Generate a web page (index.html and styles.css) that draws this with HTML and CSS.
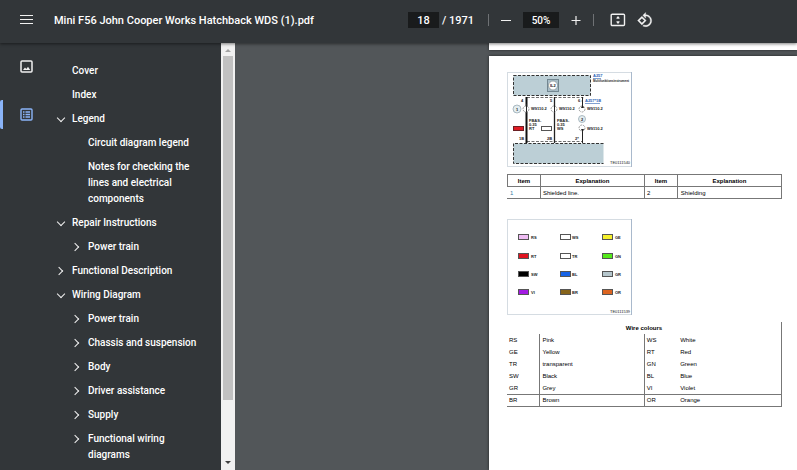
FILE: index.html
```html
<!DOCTYPE html>
<html lang="en">
<head>
<meta charset="utf-8">
<title>Mini F56 John Cooper Works Hatchback WDS (1).pdf</title>
<link rel="stylesheet" href="styles.css">
</head>
<body>
<header class="toolbar">
  <button class="icon-btn menu" aria-label="Menu"><svg width="14" height="10" viewBox="0 0 14 10"><path d="M0 .5h13M0 4.500h13M0 8.500h13" stroke="#f1f1f1" stroke-width="1"/></svg></button>
  <h1 class="title">Mini F56 John Cooper Works Hatchback WDS (1).pdf</h1>
  <div class="controls">
    <input class="field page-no" type="text" value="18" aria-label="Page number">
    <span class="total">/ 1971</span>
    <span class="sep first"></span>
    <button class="icon-btn" aria-label="Zoom out"><svg width="12" height="12" viewBox="0 0 12 12"><path d="M1 6.500h10" stroke="#f1f1f1"/></svg></button>
    <input class="field zoom" type="text" value="50%" aria-label="Zoom level">
    <button class="icon-btn" aria-label="Zoom in"><svg width="12" height="12" viewBox="0 0 12 12"><path d="M1.500 6.500h9M6 2v9" stroke="#f1f1f1" stroke-width="1.200"/></svg></button>
    <span class="sep"></span>
    <button class="icon-btn fit" aria-label="Fit to page"><svg width="16" height="14" viewBox="0 0 16 14"><rect x="1.200" y="1.200" width="13.300" height="11.300" rx="1" fill="none" stroke="#f1f1f1" stroke-width="1.400"/><path d="M8 3L10 5.500H6zM8 11L6 8.500h4zM7.500 5h1v1h-1zM7.500 8h1v1h-1z" fill="#f1f1f1"/></svg></button>
    <button class="icon-btn" aria-label="Rotate"><svg width="16" height="16" viewBox="0 0 24 24"><path fill="#f1f1f1" stroke="#f1f1f1" stroke-width=".5" d="M7.340 6.410L.86 12.900l6.490 6.480 6.490-6.480-6.500-6.490zM3.690 12.900l3.660-3.660L11 12.900l-3.660 3.660-3.650-3.660zm15.670-6.260C17.610 4.880 15.300 4 13 4V.76L8.760 5 13 9.240V6c1.790 0 3.580.68 4.950 2.050 2.730 2.730 2.730 7.170 0 9.900C16.580 19.320 14.790 20 13 20c-.97 0-1.940-.21-2.840-.61l-1.490 1.490C10.020 21.620 11.510 22 13 22c2.300 0 4.610-.88 6.360-2.640 3.520-3.510 3.520-9.210 0-12.720z"/></svg></button>
  </div>
</header>
<div class="main">
  <nav class="rail" aria-label="Panels">
    <button class="rail-btn" aria-label="Thumbnails"><svg width="13" height="13" viewBox="0 0 13 13"><rect x="1" y="1" width="11" height="11" rx="1" fill="none" stroke="#f1f1f1" stroke-width="1.500"/><path d="M3 10l2-2.500L6.300 9 8 6.800 10.200 10z" fill="#f1f1f1"/></svg></button>
    <button class="rail-btn active" aria-label="Document outline"><svg width="13" height="13" viewBox="0 0 13 13"><rect x="1" y="1" width="11" height="11" rx="1" fill="none" stroke="#8ab4f8" stroke-width="1.400"/><path d="M3 4h1.500M5.500 4H10M3 6.500h1.500M5.500 6.500H10M3 9h1.500M5.500 9H10" stroke="#8ab4f8" stroke-width="1.400"/></svg></button>
  </nav>
  <nav class="outline" aria-label="Outline">
    <ul class="tree">
      <li><div class="row"><a href="#">Cover</a></div></li>
      <li><div class="row"><a href="#">Index</a></div></li>
      <li><div class="row"><button class="chev open" aria-label="Collapse Legend"></button><a href="#">Legend</a></div>
        <ul>
          <li><div class="row"><a href="#">Circuit diagram legend</a></div></li>
          <li><div class="row"><a href="#">Notes for checking the lines and electrical components</a></div></li>
        </ul></li>
      <li><div class="row"><button class="chev open" aria-label="Collapse Repair Instructions"></button><a href="#">Repair Instructions</a></div>
        <ul>
          <li><div class="row"><button class="chev" aria-label="Expand Power train"></button><a href="#">Power train</a></div></li>
        </ul></li>
      <li><div class="row"><button class="chev" aria-label="Expand Functional Description"></button><a href="#">Functional Description</a></div></li>
      <li><div class="row"><button class="chev open" aria-label="Collapse Wiring Diagram"></button><a href="#">Wiring Diagram</a></div>
        <ul>
          <li><div class="row"><button class="chev" aria-label="Expand Power train"></button><a href="#">Power train</a></div></li>
          <li><div class="row"><button class="chev" aria-label="Expand Chassis and suspension"></button><a href="#">Chassis and suspension</a></div></li>
          <li><div class="row"><button class="chev" aria-label="Expand Body"></button><a href="#">Body</a></div></li>
          <li><div class="row"><button class="chev" aria-label="Expand Driver assistance"></button><a href="#">Driver assistance</a></div></li>
          <li><div class="row"><button class="chev" aria-label="Expand Supply"></button><a href="#">Supply</a></div></li>
          <li><div class="row"><button class="chev" aria-label="Expand Functional wiring diagrams"></button><a href="#">Functional wiring diagrams</a></div></li>
        </ul></li>
    </ul>
  </nav>
  <div class="scrollbar" aria-hidden="true">
    <svg class="arrow" width="6" height="3" viewBox="0 0 6 3"><path d="M3 0l3 3H0z" fill="#a3a3a3"/></svg>
    <span class="thumb"></span>
    <svg class="arrow" width="6" height="3" viewBox="0 0 6 3"><path d="M0 0h6L3 3z" fill="#404040"/></svg>
  </div>
  <main class="viewer">
    <div class="sheet previous"></div>
    <article class="sheet">
      <svg class="figure" width="125" height="95" viewBox="0 0 125 95" role="img" aria-label="Circuit diagram with shielded lines">
        <rect x=".5" y=".5" width="124" height="94" fill="#fff" stroke="#d5dce2"/>
        <path d="M124.500 0v95" stroke="#a9b9cc"/>
        <g fill="#bccfd6" stroke="#333" stroke-dasharray="3 1.500">
          <rect x="6.500" y="3.500" width="77" height="20"/>
          <path d="M96.500 71.500H6.500v20h90" />
        </g>
        <rect x="40.500" y="7.500" width="11" height="12" fill="#a9bec8" stroke="#738791"/>
        <circle cx="46" cy="13.500" r="4.500" fill="#fff" stroke="#7c8990" stroke-width=".7"/>
        <text x="43" y="15">IL2</text>
        <g class="link"><text x="86" y="5">A257</text><text x="78" y="30">A257*1B</text></g>
        <path d="M86 6.500h8M78 31.500h15" stroke="#4a78bd" stroke-width=".7"/>
        <text class="small" x="86" y="10">Multifunktionsinstrument</text>
        <g stroke="#333" stroke-width=".7" stroke-dasharray="3 1.500" fill="none">
          <path d="M20 25.500h56l-1 4M20 69.500h56"/>
        </g>
        <path d="M19.500 25v46" stroke="#111" stroke-width="2"/>
        <path d="M47.500 25v46" stroke="#222" stroke-width="1.300"/>
        <path d="M75.500 25v9M75.500 59v12" stroke="#222"/>
        <g fill="#fff" stroke="#777" stroke-width=".7">
          <g stroke-dasharray="2 1"><circle cx="19" cy="37" r="3"/><circle cx="47" cy="37" r="3"/><circle cx="75" cy="37" r="3"/><circle cx="75" cy="56" r="3"/></g>
          <circle cx="10" cy="37" r="4" fill="#e4edf0" stroke="#8ca0aa"/><circle cx="75" cy="47" r="3.500" fill="#e4edf0" stroke="#8ca0aa"/>
        </g>
        <path d="M19.500 32v8M47.500 32v8" stroke="#222"/>
        <path d="M75.500 33l1.500 3h-3zM75.500 60l1.500-3h-3z" fill="#222"/>
        <text x="9" y="39">1</text><text x="74" y="49">2</text>
        <text x="24" y="38">W9110.2</text><text x="52" y="38">W9110.2</text><text x="80" y="38">W9110.2</text><text x="80" y="58">W9110.2</text>
        <text x="22" y="50">FBAS-</text><text x="22" y="54">0.35</text><text x="22" y="58">RT</text>
        <text x="50" y="50">FBAS-</text><text x="50" y="54">0.35</text><text x="50" y="58">WS</text>
        <rect x="6.500" y="54.500" width="10" height="4" fill="#e01b24" stroke="#6b2024"/>
        <rect x="34.500" y="54.500" width="10" height="4" fill="#fff" stroke="#555"/>
        <text x="14" y="30">4</text><text x="43" y="30">5</text><text x="71" y="30">6</text>
        <text x="12" y="68">1B</text><text x="40" y="68">2B</text><text x="68" y="68">2*</text>
        <text class="code" x="103" y="92">TE0111540</text>
      </svg>
      <table class="items">
        <colgroup><col class="c1"><col class="c2"><col class="c3"><col class="c4"></colgroup>
        <tr><th>Item</th><th>Explanation</th><th>Item</th><th>Explanation</th></tr>
        <tr><td class="ref">1</td><td>Shielded line.</td><td>2</td><td>Shielding</td></tr>
      </table>
      <svg class="figure" width="125" height="96" viewBox="0 0 125 96" role="img" aria-label="Wire colour swatches">
        <rect x=".5" y=".5" width="124" height="95" fill="#fff" stroke="#d5dce2"/>
        <path d="M124.500 0v96" stroke="#a9b9cc"/>
        <g stroke="#555">
          <rect x="11.500" y="15.500" width="10" height="5" fill="#efbdf4"/><rect x="53.500" y="15.500" width="10" height="5" fill="#fff"/><rect x="95.500" y="15.500" width="10" height="5" fill="#f5f02c"/>
          <rect x="11.500" y="34.500" width="10" height="5" fill="#e01420"/><rect x="53.500" y="34.500" width="10" height="5" fill="#fff"/><rect x="95.500" y="34.500" width="10" height="5" fill="#55ea1b"/>
          <rect x="11.500" y="52.500" width="10" height="5" fill="#000"/><rect x="53.500" y="52.500" width="10" height="5" fill="#1763e6"/><rect x="95.500" y="52.500" width="10" height="5" fill="#b5c6cc"/>
          <rect x="11.500" y="70.500" width="10" height="5" fill="#a31be2"/><rect x="53.500" y="70.500" width="10" height="5" fill="#86641a"/><rect x="95.500" y="70.500" width="10" height="5" fill="#dc6420"/>
        </g>
        <text x="24" y="20">RS</text><text x="65" y="20">WS</text><text x="108" y="20">GE</text>
        <text x="24" y="39">RT</text><text x="65" y="39">TR</text><text x="108" y="39">GN</text>
        <text x="24" y="57">SW</text><text x="65" y="57">BL</text><text x="108" y="57">GR</text>
        <text x="24" y="75">VI</text><text x="65" y="75">BR</text><text x="108" y="75">OR</text>
        <text class="code" x="103" y="94">TE0111539</text>
      </svg>
      <table class="colours">
        <colgroup><col class="c1"><col class="c2"><col class="c3"><col class="c4"></colgroup>
        <tr><th colspan="4">Wire colours</th></tr>
        <tr><td>RS</td><td>Pink</td><td>WS</td><td>White</td></tr>
        <tr><td>GE</td><td>Yellow</td><td>RT</td><td>Red</td></tr>
        <tr><td>TR</td><td>transparent</td><td>GN</td><td>Green</td></tr>
        <tr><td>SW</td><td>Black</td><td>BL</td><td>Blue</td></tr>
        <tr><td>GR</td><td>Grey</td><td>VI</td><td>Violet</td></tr>
        <tr><td>BR</td><td>Brown</td><td>OR</td><td>Orange</td></tr>
      </table>
    </article>
  </main>
</div>
</body>
</html>
```
FILE: styles.css
```css
* { box-sizing: border-box; }
body {
  margin: 0;
  height: 100vh;
  display: flex;
  flex-direction: column;
  overflow: hidden;
  background: #525659;
  color: #fff;
  font-family: Roboto, sans-serif;
  font-size: 11px;
}
button { border: 0; padding: 0; background: none; color: inherit; }
svg { display: block; }

.toolbar {
  position: relative;
  z-index: 1;
  display: flex;
  align-items: center;
  padding: 0 20px 3px;
  height: 43px;
  flex: none;
  background: #323639;
  box-shadow: 0 1px 3px rgba(0, 0, 0, .5);
}
.title { margin: 0 0 0 20px; font-size: 11px; font-weight: 500; white-space: nowrap; width: 354px; flex: none; }
.controls { display: flex; align-items: center; gap: 11px; font-weight: 500; }
.field {
  border: 0;
  padding: 0;
  height: 16px;
  background: #191b1c;
  color: #fff;
  font: 500 11px Roboto, sans-serif;
  text-align: center;
}
.page-no { width: 31px; }
.zoom { width: 36px; font-size: 10px; }
.total { margin-left: -8px; width: 35px; white-space: nowrap; }
.sep { width: 1px; height: 12px; background: #6f7275; }
.fit { margin: 0 0 0 5px; }

.main { flex: 1; display: flex; min-height: 0; }
.rail { width: 54px; flex: none; background: #323639; padding-top: 9px; }
.rail-btn {
  display: flex;
  align-items: center;
  width: 100%;
  height: 29px;
  padding-left: 17px;
  margin-bottom: 19px;
  border-left: 3px solid transparent;
}
.rail-btn.active { border-color: #8ab4f8; border-radius: 2px; }

.outline { width: 167px; flex: none; background: #323639; padding-top: 16px; }
.outline ul { list-style: none; margin: 0; padding: 0; }
.outline ul ul { padding-left: 16px; }
.row { position: relative; padding: 4px 16px 4px 18px; font-size: 10px; line-height: 16px; font-weight: 500; }
.row a { color: #fff; text-decoration: none; }
.chev { position: absolute; left: 0; top: 4px; width: 14px; height: 16px; }
.chev::before {
  content: "";
  display: block;
  width: 5px;
  height: 5px;
  margin-left: 3px;
  border: solid #f1f1f1;
  border-width: 1px 1px 0 0;
  transform: translateX(-1px) rotate(45deg);
}
.chev.open::before { margin-left: 4px; transform: translateY(-1px) rotate(135deg); }

.scrollbar {
  display: flex;
  flex-direction: column;
  align-items: center;
  justify-content: space-between;
  width: 14px;
  flex: none;
  padding: 6px 0;
  background: #f1f1f1;
}
.thumb { width: 10px; flex: 0 0 83%; margin: 4px 0 auto; background: #c1c1c1; }

.viewer { flex: 1; min-width: 0; display: flex; flex-direction: column; gap: 6px; padding-left: 254px; }
.sheet { flex: 1; background: #fff; color: #000; padding: 16px 15px 0 18px; box-shadow: 0 0 3px rgba(0, 0, 0, .6); }
.sheet.previous { flex: none; height: 7px; padding: 0; }
.figure text { font: bold 4px "Liberation Sans", sans-serif; fill: #222; }
.figure .link text { fill: #2a62b5; }
.figure .small { font-size: 3px; }
.figure .code { font-weight: normal; }

table { border-collapse: collapse; table-layout: fixed; width: 100%; font: 6px "Liberation Sans", sans-serif; }
th, td { height: 12px; padding: 0 2px; line-height: 8px; text-align: left; }
th { text-align: center; }
td:last-child { padding-left: 3px; }
.c1 { width: 12%; }
.c2 { width: 38%; }
.c3 { width: 12%; }
.items { margin: 7px 0 20px; }
.items th, .items td { border: 1px solid #777; }
.items td:first-child { border-left-color: transparent; }
.items .ref { color: #3a7ca5; }
.colours { margin-top: 7px; border-right: 1px solid #777; }
.colours td:nth-child(2), .colours td:nth-child(3) { border-left: 1px solid #777; }
.colours tr:last-child td { border-top: 1px solid #777; border-bottom: 1px solid #777; }
```
